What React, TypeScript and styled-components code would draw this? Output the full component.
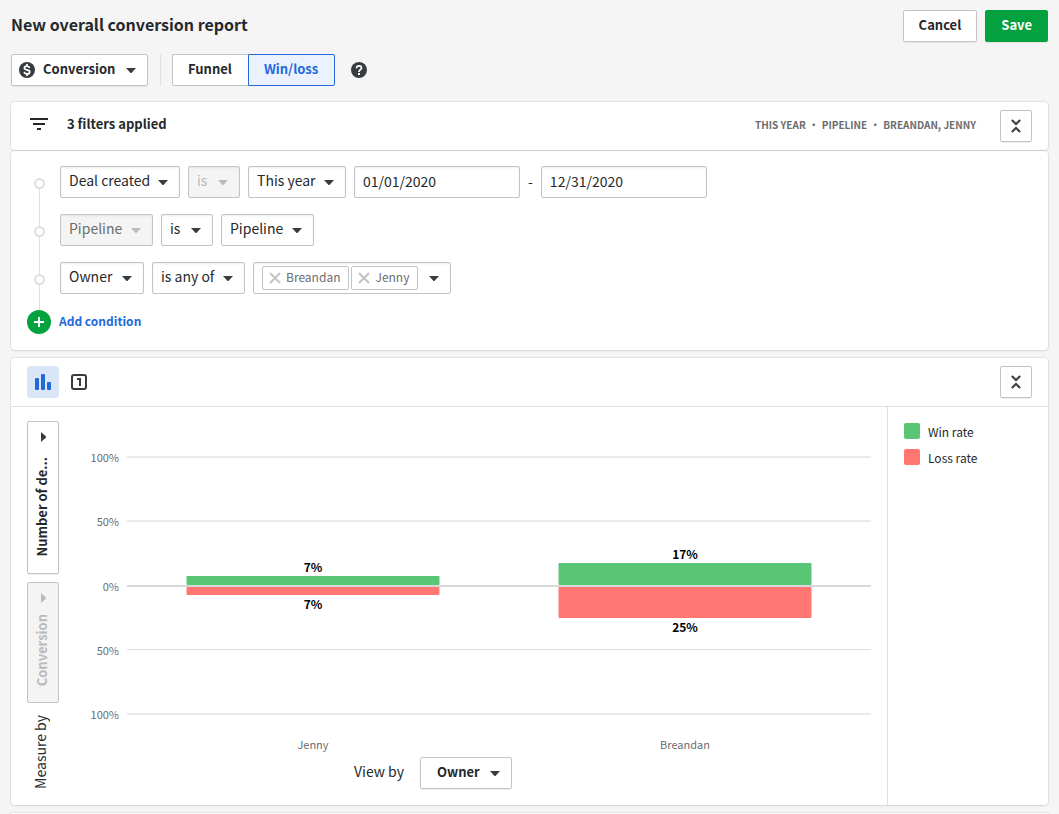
import React from "react";
import styled, { createGlobalStyle, css } from "styled-components";

const color = {
  page: "#f5f5f5",
  ink: "#26292c",
  muted: "#6b6c6e",
  faint: "#b9babb",
  border: "#c3c4c5",
  line: "#e0e0e0",
  blue: "#2469dc",
  green: "#04a13f",
  win: "#5bc576",
  loss: "#ff7673",
};

const GlobalStyle = createGlobalStyle`
  * { box-sizing: border-box; }
  body {
    margin: 0;
    background: ${color.page};
    color: ${color.ink};
    font-family: "Source Sans Pro", "Noto Sans CJK SC", "Open Sans", sans-serif;
    font-size: 14px;
    line-height: 20px;
  }
  button, input, select { font: inherit; color: inherit; }
`;

const Page = styled.div`
  min-height: 100vh;
  padding: 10px 11px 0;
  display: flex;
  flex-direction: column;
`;

const Header = styled.header`
  display: flex;
  align-items: center;
  justify-content: space-between;
  height: 32px;
`;

const Title = styled.h1`
  margin: 0;
  padding-bottom: 4px;
  font-size: 16px;
  line-height: 24px;
  font-weight: 700;
`;

const Actions = styled.div`
  display: flex;
  gap: 8px;
`;

const Button = styled.button<{ $primary?: boolean }>`
  height: 32px;
  padding: 0 15px 2px;
  font-size: 13px;
  font-weight: 700;
  border-radius: 2px;
  border: 1px solid ${(p) => (p.$primary ? color.green : color.border)};
  background: ${(p) => (p.$primary ? color.green : "#fff")};
  color: ${(p) => (p.$primary ? "#fff" : color.ink)};
  box-shadow: 0 1px 1px rgba(38, 41, 44, 0.08);
`;

const Toolbar = styled.div`
  display: flex;
  align-items: center;
  margin: 12px 0 16px;
`;

const Divider = styled.div`
  width: 1px;
  height: 32px;
  margin: 0 11px 0 12px;
  background: ${color.line};
`;

const Toggle = styled.div`
  display: flex;
  margin-right: 16px;
`;

const ToggleButton = styled.button<{ $active?: boolean }>`
  height: 32px;
  padding: 0 16px 2px 15px;
  font-size: 13px;
  font-weight: 700;
  background: #fff;
  border: 1px solid ${color.border};
  border-right: 0;
  border-radius: 2px 0 0 2px;
  ${(p) =>
    p.$active &&
    css`
      background: #ebf2fd;
      color: ${color.blue};
      border: 1px solid ${color.blue};
      border-radius: 0 2px 2px 0;
    `}
`;

const PlainButton = styled.button`
  display: flex;
  align-items: center;
  justify-content: center;
  padding: 0;
  border: 0;
  background: none;
`;

const Panels = styled.main`
  flex: 1;
  display: flex;
  flex-direction: column;
  gap: 1px;
`;

const Panel = styled.section<{ $spaced?: boolean }>`
  background: #fff;
  border-radius: 4px;
  box-shadow: 0 0 1px 1px rgba(38, 41, 44, 0.08), 0 1px 2px rgba(38, 41, 44, 0.08);
  margin-top: ${(p) => (p.$spaced ? "7px" : "0")};
`;

const PanelHeader = styled.div<{ $ruled?: boolean }>`
  display: flex;
  align-items: center;
  padding: 8px 16px;
  border-bottom: ${(p) => (p.$ruled ? `1px solid ${color.line}` : "0")};
`;

const FilterTitle = styled.h2`
  flex: 1;
  margin: 0 0 4px 16px;
  font-size: 13px;
  line-height: 20px;
  font-weight: 700;
`;

const Summary = styled.p`
  display: flex;
  gap: 3px;
  margin: 0 24px 2px 0;
  font-size: 10px;
  line-height: 16px;
  font-weight: 700;
  color: ${color.muted};
`;

const IconButton = styled.button`
  display: flex;
  align-items: center;
  justify-content: center;
  width: 32px;
  height: 32px;
  padding: 0;
  background: #fff;
  border: 1px solid ${color.border};
  border-radius: 2px;
  box-shadow: 0 1px 1px rgba(38, 41, 44, 0.08);
`;

const ViewButton = styled.button<{ $active?: boolean }>`
  display: flex;
  align-items: center;
  justify-content: center;
  width: 32px;
  height: 32px;
  margin-right: 4px;
  padding: 0;
  border: 0;
  border-radius: 4px;
  color: ${(p) => (p.$active ? color.blue : "#393c3f")};
  background: ${(p) => (p.$active ? "#d9e6f8" : "none")};
`;

const Spacer = styled.div`
  flex: 1;
`;

const Conditions = styled.div`
  padding: 15px 16px 16px;
`;

const Condition = styled.div`
  display: flex;
  height: 48px;
`;

const Rail = styled.div<{ $first?: boolean }>`
  width: 24px;
  margin-right: 9px;
  display: flex;
  flex-direction: column;
  align-items: center;
  &::before {
    content: "";
    width: 1px;
    height: 12px;
    background: ${(p) => (p.$first ? "transparent" : color.line)};
  }
  &::after {
    content: "";
    width: 1px;
    flex: 1;
    background: ${color.line};
  }
`;

const Dot = styled.span`
  width: 11px;
  height: 11px;
  border: 2px solid ${color.line};
  border-radius: 50%;
`;

const Fields = styled.div`
  display: flex;
  gap: 8px;
  height: 32px;
`;

const DateRange = styled.div`
  display: flex;
  align-items: center;
  gap: 8px;
  span { padding-bottom: 2px; }
`;

const DateInput = styled.input`
  width: 166px;
  height: 32px;
  padding: 0 8px 3px;
  background: #fff;
  border: 1px solid ${color.border};
  border-radius: 2px;
  box-shadow: inset 0 1px 2px rgba(38, 41, 44, 0.08);
`;

const SelectBox = styled.span`
  display: inline-grid;
  align-items: center;
  & > * { grid-area: 1 / 1; }
  & > svg { pointer-events: none; }
`;

const SelectCaret = styled.svg<{ $disabled?: boolean }>`
  justify-self: end;
  margin: 2px 12px 0 0;
  fill: ${(p) => (p.$disabled ? color.faint : "#393c3f")};
`;

const LeadIcon = styled.span`
  display: flex;
  margin-left: 8px;
  justify-self: start;
  pointer-events: none;
`;

const NativeSelect = styled.select<{ $width: number; $lead: number; $bold?: boolean; $tone?: string }>`
  appearance: none;
  width: ${(p) => p.$width}px;
  height: 32px;
  padding: 0 24px ${(p) => (p.$bold ? 2 : 4)}px ${(p) => p.$lead}px;
  font-size: ${(p) => (p.$bold ? 13 : 14)}px;
  font-weight: ${(p) => (p.$bold ? 700 : 400)};
  background: #fff;
  border: 1px solid ${color.border};
  border-radius: 2px;
  box-shadow: ${(p) =>
    p.$bold ? "0 1px 1px rgba(38, 41, 44, 0.08)" : "inset 0 1px 2px rgba(38, 41, 44, 0.08)"};
  &:disabled {
    background: #f4f4f4;
    color: ${(p) => p.$tone || color.faint};
    opacity: 1;
  }
`;

const TagBox = styled.div`
  display: flex;
  align-items: center;
  gap: 2px;
  height: 32px;
  padding: 0 11px 0 8px;
  border: 1px solid ${color.border};
  border-radius: 2px;
  box-shadow: inset 0 1px 2px rgba(38, 41, 44, 0.08);
`;

const Tag = styled.button`
  display: flex;
  align-items: center;
  gap: 5px;
  height: 24px;
  padding: 0 8px 2px 6px;
  font-size: 12px;
  line-height: 20px;
  color: ${color.muted};
  background: #fff;
  border: 1px solid ${color.border};
  border-radius: 2px;
  svg { margin-top: 2px; }
`;

const TagCaret = styled(PlainButton)`
  margin: 2px 0 0 9px;
`;

const AddRow = styled.button`
  display: flex;
  align-items: center;
  gap: 8px;
  height: 24px;
  padding: 0;
  border: 0;
  background: none;
  color: ${color.blue};
  font-size: 12px;
  line-height: 20px;
  font-weight: 700;
`;

const AddText = styled.span`
  padding-bottom: 2px;
`;

const PlusBadge = styled.span`
  display: flex;
  align-items: center;
  justify-content: center;
  width: 24px;
  height: 24px;
  border-radius: 50%;
  background: ${color.green};
`;

const Report = styled.div`
  display: flex;
`;

const ChartArea = styled.div`
  flex: 1;
  min-width: 0;
  display: flex;
  padding: 14px 16px 16px;
`;

const Measures = styled.div`
  width: 32px;
  display: flex;
  flex-direction: column;
  align-items: stretch;
  gap: 8px;
`;

const MeasureButton = styled.button<{ $tall?: boolean }>`
  display: flex;
  flex-direction: column;
  align-items: center;
  justify-content: space-between;
  height: ${(p) => (p.$tall ? 153 : 121)}px;
  padding: 10px 0 16px;
  font-size: 13px;
  font-weight: 700;
  background: #fff;
  border: 1px solid ${color.border};
  border-radius: 2px;
  box-shadow: 0 1px 1px rgba(38, 41, 44, 0.08);
  &:disabled {
    background: #f4f4f4;
    color: ${color.faint};
    box-shadow: none;
  }
`;

const Upright = styled.span`
  writing-mode: vertical-rl;
  transform: rotate(180deg);
  margin-right: 3px;
  line-height: 20px;
  white-space: nowrap;
`;

const MeasureLabel = styled.div`
  display: flex;
  justify-content: center;
  padding: 4px 4px 0 0;
`;

const ChartColumn = styled.div`
  flex: 1;
  min-width: 0;
`;

const ChartRow = styled.div`
  display: flex;
  gap: 8px;
`;

const Axis = styled.svg`
  flex: none;
  display: block;
  text {
    font-size: 11px;
    fill: ${color.muted};
    text-anchor: end;
  }
`;

const Plot = styled.svg`
  flex: 1;
  min-width: 0;
  display: block;
  text {
    text-anchor: middle;
    font-size: 12px;
    font-weight: 700;
    fill: #000;
  }
  text.category {
    font-size: 11px;
    font-weight: 400;
    fill: ${color.muted};
  }
`;

const ViewBy = styled.div`
  display: flex;
  align-items: center;
  justify-content: center;
  gap: 16px;
  padding-right: 64px;
  label { padding-bottom: 4px; }
`;

const Legend = styled.ul`
  width: 161px;
  margin: 0;
  padding: 16px;
  list-style: none;
  border-left: 1px solid ${color.line};
  font-size: 12px;
  line-height: 18px;
`;

const LegendItem = styled.li`
  display: flex;
  gap: 8px;
  height: 26px;
`;

const Swatch = styled.span<{ $fill: string }>`
  width: 16px;
  height: 16px;
  border-radius: 2px;
  background: ${(p) => p.$fill};
`;

const NextPanel = styled(Panel)`
  flex: 1;
  border-radius: 4px 4px 0 0;
`;

const caretPath = "M0 0 H10 Q9.400 .8 8.600 1.600 L5.900 4.600 Q5 5.600 4.100 4.600 L1.400 1.600 Q.6 .8 0 0 Z";

type SelectProps = {
  label: string;
  value: string;
  width: number;
  lead?: number;
  bold?: boolean;
  disabled?: boolean;
  tone?: string;
  id?: string;
  icon?: React.ReactNode;
};

function Select({ label, value, width, lead = 8, bold, disabled, tone, id, icon }: SelectProps) {
  return (
    <SelectBox>
      <NativeSelect
        id={id}
        aria-label={label}
        $width={width}
        $lead={lead}
        $bold={bold}
        $tone={tone}
        disabled={disabled}
      >
        <option>{value}</option>
      </NativeSelect>
      {icon && <LeadIcon>{icon}</LeadIcon>}
      <SelectCaret $disabled={disabled} width="10" height="6" aria-hidden="true">
        <path d={caretPath} />
      </SelectCaret>
    </SelectBox>
  );
}

const DollarIcon = () => (
  <svg width="16" height="16" viewBox="0 0 16 16" aria-hidden="true">
    <circle cx="8" cy="8" r="8" fill="#393c3f" />
    <path
      d="M10.600 6 C10.300 4.700 9.400 4.100 8 4.100 C6.500 4.100 5.400 4.800 5.400 6 C5.400 8.800 10.700 7.100 10.700 9.900 C10.700 11.200 9.500 11.900 8 11.900 C6.500 11.900 5.500 11.300 5.200 9.900 M8 2 V4.400 M8 11.600 V14"
      fill="none"
      stroke="#fff"
      strokeWidth="1.700"
    />
  </svg>
);

const HelpIcon = () => (
  <svg width="16" height="16" viewBox="0 0 16 16" aria-hidden="true">
    <circle cx="8" cy="8" r="8" fill="#393c3f" />
    <path
      d="M5.600 6.200 C5.600 4.600 6.600 3.800 8 3.800 C9.500 3.800 10.500 4.700 10.500 5.900 C10.500 7.700 8 7.600 8 9.900"
      fill="none"
      stroke="#fff"
      strokeWidth="1.800"
    />
    <rect x="7" y="11" width="2" height="2" fill="#fff" />
  </svg>
);

const FilterIcon = () => (
  <svg width="24" height="16" viewBox="0 0 24 16" fill={color.ink} aria-hidden="true">
    <rect x="3" y="0" width="18" height="2" />
    <rect x="6" y="5" width="12" height="2" />
    <rect x="10" y="10" width="4" height="2" />
  </svg>
);

const CollapseIcon = () => (
  <svg width="16" height="16" viewBox="0 0 16 16" fill="none" stroke="#393c3f" strokeWidth="2" aria-hidden="true">
    <path d="M3.800 2 L8 6 L12.200 2 M3.800 14 L8 10 L12.200 14" />
  </svg>
);

const BarsIcon = () => (
  <svg width="16" height="16" viewBox="0 0 16 16" fill="currentColor" aria-hidden="true">
    <rect x="0" y="4" width="4" height="12" rx="1" />
    <rect x="6" y="0" width="4" height="16" rx="1" />
    <rect x="12" y="8" width="4" height="8" rx="1" />
  </svg>
);

const OneIcon = () => (
  <svg width="16" height="16" viewBox="0 0 16 16" fill="none" stroke="currentColor" strokeWidth="2" aria-hidden="true">
    <rect x="1" y="1" width="14" height="14" rx="2" />
    <path d="M6 5 H9 V12" />
  </svg>
);

const CrossIcon = () => (
  <svg width="12" height="12" viewBox="0 0 12 12" stroke="#c3c4c5" strokeWidth="2" aria-hidden="true">
    <path d="M1 1 L11 11 M11 1 L1 11" />
  </svg>
);

const SideCaret = ({ fill }: { fill: string }) => (
  <svg width="10" height="10" viewBox="0 0 10 10" fill={fill} aria-hidden="true">
    <path d="M3 0 Q3.800 .6 4.600 1.400 L7.600 4.100 Q8.600 5 7.600 5.900 L4.600 8.600 Q3.800 9.400 3 10 Z" />
  </svg>
);

const axisTicks = [
  { label: "100%", y: 35, thickness: 2, fill: "#eaeaea" },
  { label: "50%", y: 99, thickness: 2, fill: "#eaeaea" },
  { label: "0%", y: 164, thickness: 2, fill: "#d8d8d8" },
  { label: "50%", y: 228, thickness: 1, fill: "#dedede" },
  { label: "100%", y: 292, thickness: 2, fill: "#eaeaea" },
];

const owners = [
  { name: "Jenny", x: 8, win: 7, loss: 7 },
  { name: "Breandan", x: 58, win: 17, loss: 25 },
];

const ZERO = 164;
const barHeight = (rate: number) => Math.round(rate * 1.29);

function Chart() {
  return (
    <ChartRow>
      <Axis width="60" height="336" aria-hidden="true">
        {axisTicks.map((t, i) => (
          <text key={i} x="60" y={t.y + 6}>
            {t.label}
          </text>
        ))}
      </Axis>
      <Plot height="336" role="img" aria-label="Win and loss rate by owner">
        {owners.map((o) => (
          <g key={o.name}>
            <rect x={`${o.x}%`} width="34%" y={ZERO - barHeight(o.win)} height={barHeight(o.win)} rx="1" fill={color.win} />
            <rect x={`${o.x}%`} width="34%" y={ZERO} height={barHeight(o.loss) + 1} rx="1" fill={color.loss} />
            <text x={`${o.x + 17}%`} y={ZERO - barHeight(o.win) - 4}>{o.win}%</text>
            <text x={`${o.x + 17}%`} y={ZERO + barHeight(o.loss) + 15}>{o.loss}%</text>
            <text className="category" x={`${o.x + 17}%`} y="328">{o.name}</text>
          </g>
        ))}
        {axisTicks.map((t, i) => (
          <rect key={i} x="0" width="100%" y={t.y} height={t.thickness} fill={t.fill} />
        ))}
      </Plot>
    </ChartRow>
  );
}

export default function App() {
  return (
    <>
      <GlobalStyle />
      <Page>
        <Header>
          <Title>New overall conversion report</Title>
          <Actions>
            <Button type="button">Cancel</Button>
            <Button type="button" $primary>Save</Button>
          </Actions>
        </Header>

        <Toolbar>
          <Select label="Report type" value="Conversion" width={137} lead={31} bold icon={<DollarIcon />} />
          <Divider />
          <Toggle>
            <ToggleButton type="button" aria-pressed="false">Funnel</ToggleButton>
            <ToggleButton type="button" aria-pressed="true" $active>Win/loss</ToggleButton>
          </Toggle>
          <PlainButton type="button" aria-label="Help"><HelpIcon /></PlainButton>
        </Toolbar>

        <Panels>
          <Panel>
            <PanelHeader>
              <FilterIcon />
              <FilterTitle>3 filters applied</FilterTitle>
              <Summary>
                <span>THIS YEAR</span>
                <span>·</span>
                <span>PIPELINE</span>
                <span>·</span>
                <span>BREANDAN, JENNY</span>
              </Summary>
              <IconButton type="button" aria-label="Collapse filters"><CollapseIcon /></IconButton>
            </PanelHeader>
          </Panel>

          <Panel>
            <Conditions>
              <Condition>
                <Rail $first><Dot /></Rail>
                <Fields>
                  <Select label="Field" value="Deal created" width={120} />
                  <Select label="Operator" value="is" width={52} disabled />
                  <Select label="Period" value="This year" width={98} />
                  <DateRange>
                    <DateInput aria-label="From date" defaultValue="01/01/2020" />
                    <span>-</span>
                    <DateInput aria-label="To date" defaultValue="12/31/2020" />
                  </DateRange>
                </Fields>
              </Condition>
              <Condition>
                <Rail><Dot /></Rail>
                <Fields>
                  <Select label="Field" value="Pipeline" width={93} disabled tone={color.muted} />
                  <Select label="Operator" value="is" width={52} />
                  <Select label="Pipeline" value="Pipeline" width={93} />
                </Fields>
              </Condition>
              <Condition>
                <Rail><Dot /></Rail>
                <Fields>
                  <Select label="Field" value="Owner" width={84} />
                  <Select label="Operator" value="is any of" width={93} />
                  <TagBox>
                    <Tag type="button"><CrossIcon />Breandan</Tag>
                    <Tag type="button"><CrossIcon />Jenny</Tag>
                    <TagCaret type="button" aria-label="Choose owners">
                      <svg width="10" height="6" fill="#393c3f"><path d={caretPath} /></svg>
                    </TagCaret>
                  </TagBox>
                </Fields>
              </Condition>
              <AddRow type="button">
                <PlusBadge>
                  <svg width="10" height="10" stroke="#fff" strokeWidth="2" aria-hidden="true">
                    <path d="M5 0 V10 M0 5 H10" />
                  </svg>
                </PlusBadge>
                <AddText>Add condition</AddText>
              </AddRow>
            </Conditions>
          </Panel>

          <Panel $spaced>
            <PanelHeader $ruled>
              <ViewButton type="button" aria-label="Chart view" $active><BarsIcon /></ViewButton>
              <ViewButton type="button" aria-label="Scorecard view"><OneIcon /></ViewButton>
              <Spacer />
              <IconButton type="button" aria-label="Collapse chart"><CollapseIcon /></IconButton>
            </PanelHeader>
            <Report>
              <ChartArea>
                <Measures>
                  <MeasureButton type="button" $tall>
                    <SideCaret fill="#393c3f" />
                    <Upright>Number of de...</Upright>
                  </MeasureButton>
                  <MeasureButton type="button" disabled>
                    <SideCaret fill={color.faint} />
                    <Upright>Conversion</Upright>
                  </MeasureButton>
                  <MeasureLabel><Upright>Measure by</Upright></MeasureLabel>
                </Measures>
                <ChartColumn>
                  <Chart />
                  <ViewBy>
                    <label htmlFor="view-by">View by</label>
                    <Select id="view-by" label="View by" value="Owner" width={92} lead={16} bold />
                  </ViewBy>
                </ChartColumn>
              </ChartArea>
              <Legend>
                <LegendItem><Swatch $fill={color.win} />Win rate</LegendItem>
                <LegendItem><Swatch $fill={color.loss} />Loss rate</LegendItem>
              </Legend>
            </Report>
          </Panel>

          <NextPanel $spaced />
        </Panels>
      </Page>
    </>
  );
}
